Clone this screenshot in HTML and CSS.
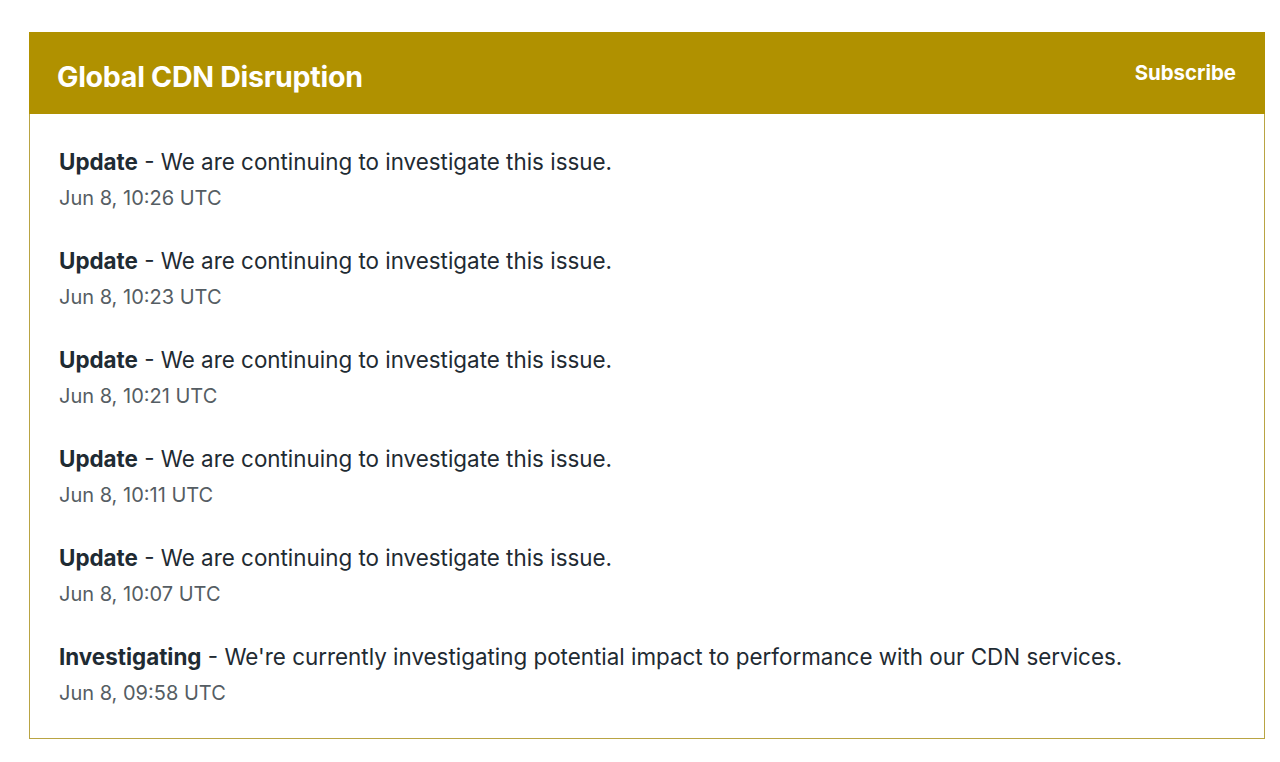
FILE: index.html
```html
<!DOCTYPE html>
<html>
<head>
<meta charset="utf-8">
<link rel="stylesheet" href="styles.css">
</head>
<body>
<div class="card">
  <div class="card-header">
    <h1 class="title">Global CDN Disruption</h1>
    <a class="subscribe" href="#">Subscribe</a>
  </div>
  <div class="card-body">
    <div class="update">
      <div class="msg"><strong>Update</strong> - We are continuing to investigate this issue.</div>
      <div class="time">Jun 8, 10:26 UTC</div>
    </div>
    <div class="update">
      <div class="msg"><strong>Update</strong> - We are continuing to investigate this issue.</div>
      <div class="time">Jun 8, 10:23 UTC</div>
    </div>
    <div class="update">
      <div class="msg"><strong>Update</strong> - We are continuing to investigate this issue.</div>
      <div class="time">Jun 8, 10:21 UTC</div>
    </div>
    <div class="update">
      <div class="msg"><strong>Update</strong> - We are continuing to investigate this issue.</div>
      <div class="time">Jun 8, 10:11 UTC</div>
    </div>
    <div class="update">
      <div class="msg"><strong>Update</strong> - We are continuing to investigate this issue.</div>
      <div class="time">Jun 8, 10:07 UTC</div>
    </div>
    <div class="update">
      <div class="msg"><strong>Investigating</strong> - We're currently investigating potential impact to performance with our CDN services.</div>
      <div class="time">Jun 8, 09:58 UTC</div>
    </div>
  </div>
</div>
</body>
</html>
```

FILE: styles.css
```css
html, body {
  margin: 0;
  padding: 0;
  background: #ffffff;
}
body {
  font-family: Inter, "Liberation Sans", sans-serif;
  color: #1f2b33;
}
.card {
  margin: 32px 15px 0 29px;
  border: 1px solid #b9a443;
  border-top: none;
}
.card-header {
  background: #b09100;
  height: 82px;
  display: flex;
  align-items: center;
  justify-content: space-between;
  padding: 0 29px 0 28px;
  margin: 0 -1px;
}
.title {
  margin: 0;
  color: #ffffff;
  font-size: 28.6px;
  font-weight: 700;
  letter-spacing: -0.3px;
  padding-top: 6px;
}
.subscribe {
  color: #ffffff;
  font-size: 20.4px;
  font-weight: 700;
  text-decoration: none;
  padding-bottom: 2px;
}
.card-body {
  padding: 33px 29px 33px;
  display: flex;
  flex-direction: column;
  gap: 36px;
}
.update {
  display: flex;
  flex-direction: column;
  gap: 9px;
}
.msg {
  font-size: 22.4px;
  line-height: 30px;
}
.msg strong {
  font-weight: 700;
}
.time {
  font-size: 20px;
  line-height: 24px;
  color: #555d63;
}
```
